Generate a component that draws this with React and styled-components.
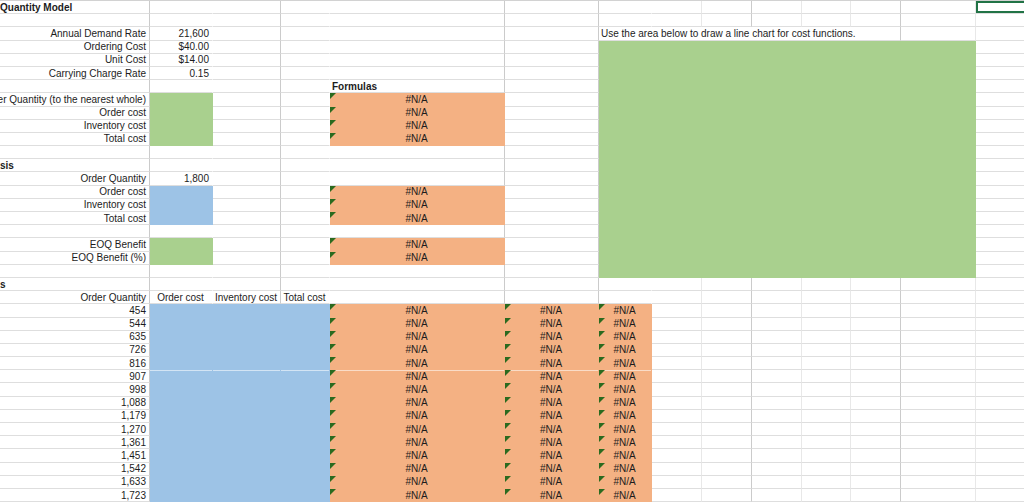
import React from "react";
import styled, { createGlobalStyle, css } from "styled-components";

const GlobalStyle = createGlobalStyle`
  html, body {
    margin: 0;
    padding: 0;
    background: #fff;
  }
  body {
    font-family: "Liberation Sans", Arial, sans-serif;
  }
`;

const GREEN = "#a9d08e";
const BLUE = "#9dc3e6";
const ORANGE = "#f4b183";
const ROW_H = 13.2;
const ROW_COUNT = 38;

// column widths in px, and how strong the grid line on the right edge looks
const COLS = [150, 63, 68, 49, 175, 94, 53, 50, 50, 50, 49, 50, 75, 60];
const VLINE = ["strong", "none", "strong", "none", "strong", "strong", "none", "light", "strong", "light", "light", "strong", "light", "light"];
const LINE = { strong: "#cbcbcb", light: "#e8e8e8", none: "#fff" };

const Sheet = styled.div`
  width: 1024px;
  height: 502px;
  overflow: hidden;
  border-top: 1px solid #d2d2d2;
  box-sizing: border-box;
  display: grid;
  grid-template-columns: ${COLS.map((w) => w + "px").join(" ")};
  grid-template-rows: repeat(${ROW_COUNT}, ${ROW_H}px);
  font-size: 10px;
  color: #1c1c1c;
`;

const Cell = styled.div`
  position: relative;
  box-sizing: border-box;
  grid-row: ${(p) => p.$row + 1};
  grid-column: ${(p) => p.$col + 1} / span ${(p) => p.$span};
  display: flex;
  align-items: center;
  justify-content: ${(p) =>
    p.$align === "left" ? "flex-start" : p.$align === "center" ? "center" : "flex-end"};
  padding: 0 3px 0 ${(p) => (p.$heading ? "0" : "2px")};
  font-weight: ${(p) => (p.$bold ? 700 : 400)};
  white-space: nowrap;
  background: ${(p) => p.$fill || "#fff"};
  border-right: 1px solid ${(p) => (p.$fill ? p.$fill : LINE[p.$vline])};
  border-bottom: 1px solid ${(p) => (p.$fill ? p.$fill : "#dedede")};

  ${(p) =>
    p.$flag &&
    css`
      &::before {
        content: "";
        position: absolute;
        left: 0;
        top: 0;
        border-top: 6px solid #2b6a1f;
        border-right: 6px solid transparent;
      }
    `}

  ${(p) =>
    p.$seam &&
    css`
      box-shadow: inset 0 1px 0 rgba(255, 255, 255, 0.55);
    `}

  ${(p) =>
    p.$selected &&
    css`
      box-shadow: inset 0 0 0 2px #217346;
    `}

  ${(p) =>
    p.$mark &&
    css`
      box-shadow: 0 -1px 0 #3d8a5c;
    `}
`;

const ChartArea = styled.div`
  grid-row: 4 / span 18;
  grid-column: 7 / span 7;
  background: ${GREEN};
`;

const label = (text) => ({ text });
const value = (text) => ({ text });
const heading = (text) => ({ text, bold: true, heading: true, align: "left" });
const na = (fill = ORANGE) => ({ text: "#N/A", fill, flag: true, align: "center" });

const QUANTITIES = ["454", "544", "635", "726", "816", "907", "998", "1,088", "1,179", "1,270", "1,361", "1,451", "1,542", "1,633", "1,723"];

const ROWS = {
  0: { 0: heading("Quantity Model"), 11: { mark: true }, 13: { selected: true } },
  2: {
    0: label("Annual Demand Rate"),
    1: value("21,600"),
    6: { text: "Use the area below to draw a line chart for cost functions.", align: "left", span: 6 },
  },
  3: { 0: label("Ordering Cost"), 1: value("$40.00") },
  4: { 0: label("Unit Cost"), 1: value("$14.00") },
  5: { 0: label("Carrying Charge Rate"), 1: value("0.15") },
  6: { 4: { text: "Formulas", bold: true, align: "left" } },
  7: { 0: label("Economic Order Quantity (to the nearest whole)"), 1: { fill: GREEN }, 4: na() },
  8: { 0: label("Order cost"), 1: { fill: GREEN }, 4: na() },
  9: { 0: label("Inventory cost"), 1: { fill: GREEN }, 4: na() },
  10: { 0: label("Total cost"), 1: { fill: GREEN }, 4: na() },
  12: { 0: heading("sis") },
  13: { 0: label("Order Quantity"), 1: value("1,800") },
  14: { 0: label("Order cost"), 1: { fill: BLUE }, 4: na() },
  15: { 0: label("Inventory cost"), 1: { fill: BLUE }, 4: na() },
  16: { 0: label("Total cost"), 1: { fill: BLUE }, 4: na() },
  18: { 0: label("EOQ Benefit"), 1: { fill: GREEN }, 4: na() },
  19: { 0: label("EOQ Benefit (%)"), 1: { fill: GREEN }, 4: na() },
  21: { 0: heading("s") },
  22: {
    0: label("Order Quantity"),
    1: { text: "Order cost", align: "center" },
    2: { text: "Inventory cost", align: "center" },
    3: { text: "Total cost", align: "center" },
  },
};

QUANTITIES.forEach((q, i) => {
  const seam = i === 5;
  ROWS[23 + i] = {
    0: label(q),
    1: { fill: BLUE, seam },
    2: { fill: BLUE, seam },
    3: { fill: BLUE, seam },
    4: { ...na(), seam },
    5: { ...na(), seam },
    6: { ...na(), seam },
  };
});

const underChart = (r, c) => r >= 3 && r <= 20 && c >= 6 && c <= 12;

const buildCells = () => {
  const cells = [];
  for (let r = 0; r < ROW_COUNT; r++) {
    const spec = ROWS[r] || {};
    let c = 0;
    while (c < COLS.length) {
      if (underChart(r, c)) {
        c++;
        continue;
      }
      const s = spec[c] || {};
      const span = s.span || 1;
      cells.push(
        <Cell
          key={`${r}-${c}`}
          $row={r}
          $col={c}
          $span={span}
          $fill={s.fill}
          $align={s.align}
          $bold={s.bold}
          $heading={s.heading}
          $flag={s.flag}
          $seam={s.seam}
          $selected={s.selected}
          $mark={s.mark}
          $vline={VLINE[c + span - 1]}
        >
          {s.text && <span>{s.text}</span>}
        </Cell>
      );
      c += span;
    }
  }
  return cells;
};

export default function App() {
  return (
    <>
      <GlobalStyle />
      <Sheet>
        {buildCells()}
        <ChartArea />
      </Sheet>
    </>
  );
}
